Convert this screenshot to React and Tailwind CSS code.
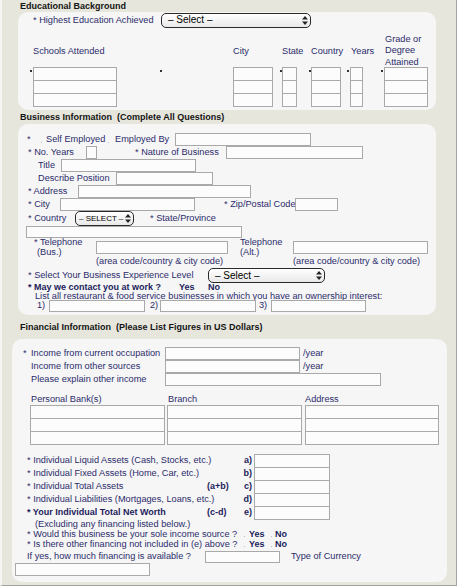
import React from "react";

const Box = ({ w, h = "h-[13px]", className = "" }) => (
  <div className={`${w} ${h} shrink-0 border border-[#a9a9a9] bg-[#fcfcfc] ${className}`} />
);

const Stack = ({ w }) => (
  <div className="flex flex-col shrink-0">
    {[0, 1, 2].map(i => (
      <div key={i} className={`${w} h-[14px] border border-[#a9a9a9] bg-[#fcfcfc] ${i ? "-mt-px" : ""}`} />
    ))}
  </div>
);

const Bullet = ({ w }) => (
  <div className={`${w} shrink-0 pt-[3px]`}>
    <div className="w-[2px] h-[2px] bg-[#333]" />
  </div>
);

const Dot = ({ w }) => (
  <span className={`${w} shrink-0 flex items-center`}>
    <span className="w-px h-px bg-[#bdbdbd] mt-[5px]" />
  </span>
);

const Select = ({ w, label, small }) => (
  <div className={`${w} h-[15px] shrink-0 flex items-center border border-[#2a2a2a] rounded-[5px] bg-gradient-to-b from-white to-[#e9e9e9] pr-[2px] leading-none text-black ${small ? "pl-[3px] text-[8px]" : "pl-[6px] text-[10px]"}`}>
    <span className="flex-1 whitespace-nowrap">{label}</span>
    <svg width="6" height="9" viewBox="0 0 6 9" className="shrink-0">
      <polygon points="3,0 6,3.5 0,3.5" fill="#222" />
      <polygon points="0,5.5 6,5.5 3,9" fill="#222" />
    </svg>
  </div>
);

const Heading = ({ h, children }) => (
  <div className={`${h} pl-[18px] font-bold text-[9px] text-[#141414] whitespace-nowrap flex items-center`}>{children}</div>
);

const S = ({ w, className = "", children }) => (
  <span className={`${w} shrink-0 whitespace-nowrap ${className}`}>{children}</span>
);

const bold = "font-bold text-[9px] text-[#1c1c5c]";

export default function App() {
  return (
    <div className="w-[457px] h-[586px] overflow-hidden flex flex-col bg-[#e7e6dd] border-l-2 border-l-[#f4f4f2] border-r border-r-[#a3a3a3] border-b border-b-[#a3a3a3] font-['Liberation_Sans',Arial,sans-serif] text-[9.2px] leading-[11px] text-[#2b2b6b]">
      {/* Educational Background */}
      <Heading h="h-[12px]">Educational Background</Heading>
      <div className="ml-[16px] w-[418px] h-[98px] shrink-0 rounded-[10px] bg-[#f6f6f6] flex flex-col">
        <div className="flex items-center h-[16px] pl-[15px]">
          <S w="w-[128px]">* Highest Education Achieved</S>
          <Select w="w-[150px]" label="– Select –" />
        </div>
        <div className="flex items-center h-[32px] mt-[7px] pl-[15px]">
          <S w="w-[200px]">Schools Attended</S>
          <S w="w-[49px]">City</S>
          <S w="w-[29px]">State</S>
          <S w="w-[40px]">Country</S>
          <S w="w-[34px]">Years</S>
          <div className="leading-[11.5px]">Grade or<br />Degree<br />Attained</div>
        </div>
        <div className="flex items-start pl-[12px]">
          <div className="flex"><Bullet w="w-[3px]" /><Stack w="w-[84px]" /></div>
          <div className="flex ml-[43px]"><Bullet w="w-[3px]" /></div>
          <div className="flex ml-[70px]"><Stack w="w-[40px]" /></div>
          <div className="flex ml-[7px]"><Bullet w="w-[2px]" /><Stack w="w-[15px]" /></div>
          <div className="flex ml-[12px]"><Bullet w="w-[2px]" /><Stack w="w-[30px]" /></div>
          <div className="flex ml-[6px]"><Bullet w="w-[3px]" /><Stack w="w-[13px]" /></div>
          <div className="flex ml-[18px]"><Bullet w="w-[3px]" /><Stack w="w-[44px]" /></div>
        </div>
      </div>

      {/* Business Information */}
      <Heading h="h-[14px]">Business Information&nbsp; (Complete All Questions)</Heading>
      <div className="ml-[16px] w-[418px] h-[191px] shrink-0 rounded-[10px] bg-[#f6f6f6] flex flex-col pt-[9px]">
        <div className="flex items-center h-[13px] pl-[9px]">
          <S w="w-[14px]">*</S>
          <Dot w="w-[5px]" />
          <S w="w-[62px]">Self Employed</S>
          <Dot w="w-[7px]" />
          <S w="w-[60px]">Employed By</S>
          <Box w="w-[136px]" />
        </div>
        <div className="flex items-center h-[13px] pl-[10px]">
          <S w="w-[58px]">* No. Years</S>
          <Box w="w-[11px]" />
          <S w="w-[38px]" />
          <S w="w-[91px]">* Nature of Business</S>
          <Box w="w-[137px]" />
        </div>
        <div className="flex items-center h-[13px] pl-[20px]">
          <S w="w-[23px]">Title</S>
          <Box w="w-[135px]" />
        </div>
        <div className="flex items-center h-[13px] pl-[20px]">
          <S w="w-[78px]">Describe Position</S>
          <Box w="w-[97px]" />
        </div>
        <div className="flex items-center h-[13px] pl-[10px]">
          <S w="w-[50px]">* Address</S>
          <Box w="w-[173px]" />
        </div>
        <div className="flex items-center h-[13px] pl-[10px]">
          <S w="w-[32px]">* City</S>
          <Box w="w-[135px]" />
          <S w="w-[29px]" />
          <S w="w-[71px]">* Zip/Postal Code</S>
          <Box w="w-[43px]" />
        </div>
        <div className="flex items-center h-[15px] pl-[10px]">
          <S w="w-[47px]">* Country</S>
          <Select w="w-[59px]" label="– SELECT –" small />
          <S w="w-[16px]" />
          <S w="w-[80px]">* State/Province</S>
        </div>
        <div className="flex items-center h-[12px] pl-[8px]">
          <Box w="w-[216px]" h="h-[12px]" />
        </div>
        <div className="flex items-start h-[18px] pl-[16px]">
          <div className="w-[62px] shrink-0 leading-[9.5px]">
            <div>* Telephone</div>
            <div className="pl-[3px]">(Bus.)</div>
          </div>
          <Box w="w-[132px]" className="mt-[3px]" />
          <S w="w-[12px]" />
          <div className="w-[53px] shrink-0 leading-[9.5px]">
            <div>Telephone</div>
            <div>(Alt.)</div>
          </div>
          <Box w="w-[135px]" className="mt-[3px]" />
        </div>
        <div className="flex items-center h-[11px] pl-[78px]">
          <S w="w-[197px]">(area code/country &amp; city code)</S>
          <S w="w-[140px]">(area code/country &amp; city code)</S>
        </div>
        <div className="flex items-center h-[15px] mt-px pl-[10px]">
          <S w="w-[180px]">* Select Your Business Experience Level</S>
          <Select w="w-[117px]" label="– Select –" />
        </div>
        <div className={`flex items-center h-[9px] pl-[10px] ${bold}`}>
          <S w="w-[151px]">* May we contact you at work ?</S>
          <S w="w-[29px]">Yes</S>
          <S w="w-[20px]">No</S>
        </div>
        <div className="flex items-center h-[8px] pl-[17px]">
          <S w="w-[350px]">List all restaurant &amp; food service businesses in which you have an ownership interest:</S>
        </div>
        <div className="flex items-center h-[11px] pl-[19px]">
          <S w="w-[12px]">1)</S>
          <Box w="w-[96px]" h="h-[12px]" />
          <S w="w-[5px]" />
          <S w="w-[10px]">2)</S>
          <Box w="w-[96px]" h="h-[12px]" />
          <S w="w-[3px]" />
          <S w="w-[12px]">3)</S>
          <Box w="w-[95px]" h="h-[12px]" />
        </div>
      </div>

      {/* Financial Information */}
      <Heading h="h-[24px]">Financial Information&nbsp; (Please List Figures in US Dollars)</Heading>
      <div className="ml-[10px] w-[435px] h-[243px] shrink-0 rounded-[10px] bg-[#f6f6f6] flex flex-col pt-[8px]">
        <div className="flex items-center h-[13px] pl-[11px]">
          <S w="w-[8px]">*</S>
          <S w="w-[134px]">Income from current occupation</S>
          <Box w="w-[135px]" />
          <S w="w-[3px]" />
          <S w="w-[30px]">/year</S>
        </div>
        <div className="flex items-center h-[13px] pl-[19px]">
          <S w="w-[134px]">Income from other sources</S>
          <Box w="w-[135px]" />
          <S w="w-[3px]" />
          <S w="w-[30px]">/year</S>
        </div>
        <div className="flex items-center h-[13px] pl-[19px]">
          <S w="w-[134px]">Please explain other income</S>
          <Box w="w-[216px]" />
        </div>
        <div className="flex items-center h-[11px] mt-[8px] pl-[19px]">
          <S w="w-[137px]">Personal Bank(s)</S>
          <S w="w-[137px]">Branch</S>
          <S w="w-[60px]">Address</S>
        </div>
        <div className="flex items-start pl-[18px]">
          <Stack w="w-[135px]" />
          <div className="ml-[2px]"><Stack w="w-[135px]" /></div>
          <div className="ml-[3px]"><Stack w="w-[134px]" /></div>
        </div>
        <div className="flex flex-col mt-[9px] pl-[15px]">
          {[
            ["* Individual Liquid Assets (Cash, Stocks, etc.)", "", "a)", false],
            ["* Individual Fixed Assets (Home, Car, etc.)", "", "b)", false],
            ["* Individual Total Assets", "(a+b)", "c)", false],
            ["* Individual Liabilities (Mortgages, Loans, etc.)", "", "d)", false],
            ["* Your Individual Total Net Worth", "(c-d)", "e)", true],
          ].map(([label, calc, letter, strong]) => (
            <div key={letter} className="flex items-center h-[13px]">
              <S w="w-[180px]" className={strong ? bold : ""}>{label}</S>
              <span className={`w-[45px] shrink-0 flex justify-between ${bold}`}>
                <span>{calc}</span>
                <span>{letter}</span>
              </span>
              <S w="w-[2px]" />
              <Box w="w-[76px]" h="h-[14px]" className="self-start" />
            </div>
          ))}
        </div>
        <div className="flex items-center h-[10px] pl-[23px]">
          <S w="w-[200px]">(Excluding any financing listed below.)</S>
        </div>
        <div className="flex items-center h-[10px] pl-[15px]">
          <S w="w-[217px]">* Would this business be your sole income source ?</S>
          <Dot w="w-[5px]" />
          <S w="w-[22px]" className={bold}>Yes</S>
          <Dot w="w-[4px]" />
          <S w="w-[20px]" className={bold}>No</S>
        </div>
        <div className="flex items-center h-[10px] pl-[15px]">
          <S w="w-[217px]">* Is there other financing not included in (e) above ?</S>
          <Dot w="w-[5px]" />
          <S w="w-[22px]" className={bold}>Yes</S>
          <Dot w="w-[4px]" />
          <S w="w-[20px]" className={bold}>No</S>
        </div>
        <div className="flex items-center h-[13px] mt-px pl-[15px]">
          <S w="w-[178px]">If yes, how much financing is available ?</S>
          <Box w="w-[75px]" h="h-[12px]" />
          <S w="w-[11px]" />
          <S w="w-[80px]">Type of Currency</S>
        </div>
        <div className="flex pl-[3px]">
          <Box w="w-[135px]" h="h-[13px]" />
        </div>
      </div>
    </div>
  );
}
